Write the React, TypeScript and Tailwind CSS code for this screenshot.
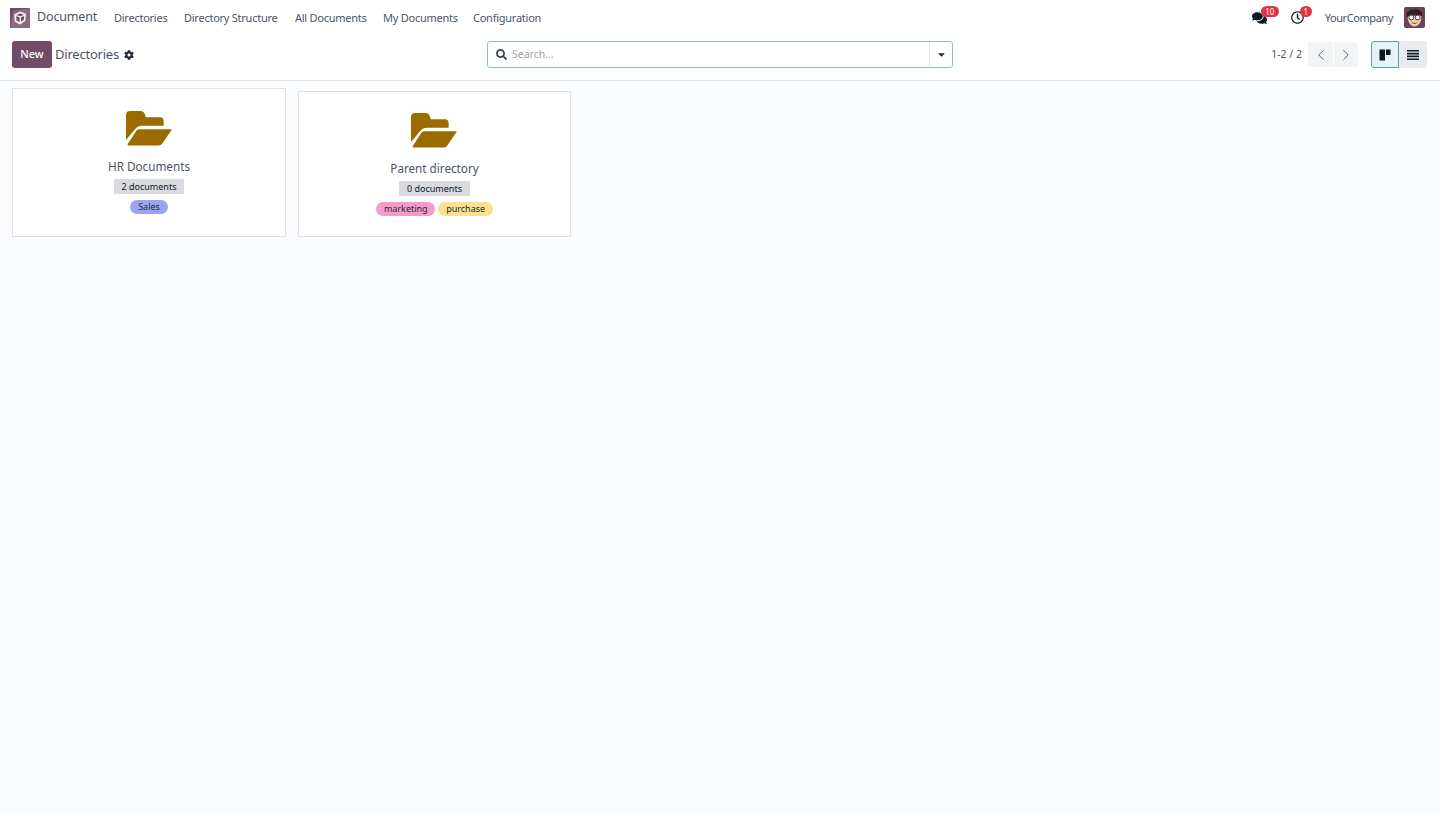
import React from "react";
import { FaCog, FaSearch, FaComments, FaCaretDown, FaRegClock } from "react-icons/fa";
import { ChevronLeft, ChevronRight } from "lucide-react";

function Logo() {
  return (
    <svg width="20" height="20" viewBox="0 0 20 20" className="shrink-0">
      <rect width="20" height="20" fill="#6f4d66" />
      <path d="M20 0v20H0L3 3z" fill="#8a6a80" />
      <path d="M10.200 3.400 16 5.800 15.400 13 9.800 16.400 4.800 13.800 4.200 6.200Z" fill="#f4eff2" />
      <path d="M6.400 7 10.200 5.400 13.800 6.800 10.400 8.200ZM6.200 8 9.600 9.400 9.600 14.200 6.600 12.600ZM11 9.200 14.200 8 13.800 12 11 13.800Z" fill="#6b5065" />
    </svg>
  );
}

function Avatar() {
  return (
    <svg width="21" height="21" viewBox="0 0 21 21" className="shrink-0">
      <rect width="21" height="21" rx="2" fill="#6e3f56" />
      <path d="M3.500 9c0 6.500 3.500 10.500 7 10.500s7-4 7-10.500z" fill="#f3c9a5" />
      <path d="M2.800 11V5.500L6.500 2.600h8l3.700 3V11l-1.300-3.500-3.400.5-5.500-.7-2.500.7z" fill="#2b2320" />
      <circle cx="7.300" cy="10.500" r="2.400" fill="#fff" stroke="#333" strokeWidth=".9" />
      <circle cx="13.700" cy="10.500" r="2.400" fill="#fff" stroke="#333" strokeWidth=".9" />
      <path d="M7.500 15c2 1.200 4 1.200 6 0-1 2.500-5 2.500-6 0z" fill="#8c3b34" />
    </svg>
  );
}

function Folder() {
  return (
    <svg width="46" height="35" viewBox="0 0 46 35" className="-ml-[1px] shrink-0 text-[#9c6b00]">
      <path
        d="M0 4Q0 0 4 0H15Q17.700 0 18.500 2.500L19.800 6.300H33.700Q37.700 6.300 37.700 10.700V14.700H16Q12 14.700 9.300 18L0 29Z"
        fill="currentColor"
      />
      <path
        d="M12.700 18.300H46L36.700 32Q35 34.500 32.700 34.500H3Q1 34.500 2 32.500L9.300 21.500Q10.700 18.300 12.700 18.300Z"
        fill="currentColor"
      />
    </svg>
  );
}

function KanbanIcon() {
  return (
    <svg width="12" height="12" viewBox="0 0 12 12" className="text-[#111827]">
      <path d="M0.500 .5h5.500v11H0.500zM7 .5h4.500v5.500H7z" fill="currentColor" />
    </svg>
  );
}

function ListIcon() {
  return (
    <svg width="12" height="10" viewBox="0 0 12 10" className="text-[#111827]">
      <path d="M0 0h12v1.600H0zM0 2.800h12v1.600H0zM0 5.600h12v1.600H0zM0 8.400h12V10H0z" fill="currentColor" />
    </svg>
  );
}

function Tag({ label, bg }: { label: string; bg: string }) {
  return <span className={`${bg} h-[14px] rounded-full px-[7.750px] text-[9px] leading-[14px] text-[#1f2937]`}>{label}</span>;
}

function Card({ title, count, className, children }: { title: string; count: string; className: string; children: React.ReactNode }) {
  return (
    <div className={`${className} flex flex-col items-center border border-[#dee2e6] bg-white`}>
      <Folder />
      <div className="mt-[11px] text-[11.700px] leading-[18px] text-[#4b5563]">{title}</div>
      <div className="mt-[4px] bg-[#d8dadd] px-2 text-[9px] leading-[15px] text-[#111827]">{count}</div>
      <div className="mt-[6px] flex gap-[3px]">{children}</div>
    </div>
  );
}

export default function App() {
  return (
    <div className="flex min-h-[813px] flex-col bg-[#f9fbfc] font-['Noto_Sans',sans-serif]">
      <nav className="flex h-[35px] items-center bg-white pl-[10px] pr-[15px] text-[#4b5563]">
        <Logo />
        <span className="ml-[7px] w-[77px] text-[12.500px] tracking-[-0.15px]">Document</span>
        <div className="mt-px flex text-[11px] tracking-[-0.25px]">
          <span className="w-[70px]">Directories</span>
          <span className="w-[111px]">Directory Structure</span>
          <span className="w-[88px]">All Documents</span>
          <span className="w-[90px]">My Documents</span>
          <span>Configuration</span>
        </div>
        <div className="ml-auto flex items-center">
          <div className="relative mr-[25px] h-[14px] w-[14px] text-[#111827]">
            <FaComments className="h-[14px] w-[15px]" />
            <span className="absolute left-[9px] top-[-5px] h-[11px] w-[18px] rounded-full bg-[#dc3545] text-center text-[8px] leading-[11px] text-white">10</span>
          </div>
          <div className="relative mr-[20px] h-[14px] w-[14px] text-[#111827]">
            <FaRegClock className="h-[13px] w-[13px]" />
            <span className="absolute left-[9px] top-[-5px] h-[11px] w-[12px] rounded-full bg-[#dc3545] text-center text-[8px] leading-[11px] text-white">1</span>
          </div>
          <span className="mr-[11px] mt-px text-[11px] tracking-[-0.42px]">YourCompany</span>
          <Avatar />
        </div>
      </nav>

      <header className="flex h-[46px] items-start border-b border-[#dee2e6] bg-white pt-[6px]">
        <div className="flex w-[487px] items-center pl-[12px]">
          <button className="h-[27px] w-[40px] rounded-[3px] bg-[#714b67] text-[11px] font-medium text-white">New</button>
          <span className="ml-[3px] mt-px text-[13px] tracking-[-0.22px] text-[#4b5563]">Directories</span>
          <FaCog className="ml-[5px] h-[10px] w-[10px] text-[#1f2937]" />
        </div>
        <div className="flex h-[27px] w-[466px] items-center rounded-[3px] border border-[#8fc3bf] bg-white">
          <FaSearch className="ml-[8px] h-[11px] w-[11px] text-[#374151]" />
          <span className="ml-[5px] flex-1 text-[10.500px] text-[#9ca3af]">Search...</span>
          <div className="flex h-full w-[23px] items-center justify-center border-l border-[#dee2e6]">
            <FaCaretDown className="h-[11px] w-[11px] text-[#1f2937]" />
          </div>
        </div>
        <div className="flex flex-1 items-center justify-end pr-[13px]">
          <span className="mr-[6px] text-[10.500px] text-[#4b5563]">1-2 / 2</span>
          <div className="mr-[13px] flex h-[25px]">
            <div className="flex w-[25px] items-center justify-center rounded-l-[3px] bg-[#f1f3f5]">
              <ChevronLeft size={18} strokeWidth={1.25} className="text-[#4b5563]" />
            </div>
            <div className="flex w-[25px] items-center justify-center rounded-r-[3px] border-l border-white bg-[#f1f3f5]">
              <ChevronRight size={18} strokeWidth={1.25} className="text-[#4b5563]" />
            </div>
          </div>
          <div className="flex h-[27px]">
            <div className="flex w-[28px] items-center justify-center rounded-l-[3px] border border-[#5f9f9f] bg-[#e6f2f3]">
              <KanbanIcon />
            </div>
            <div className="flex w-[28px] items-center justify-center rounded-r-[3px] bg-[#e9ecef]">
              <ListIcon />
            </div>
          </div>
        </div>
      </header>

      <main className="flex items-end gap-[12px] px-[12px] pt-[7px]">
        <Card title="HR Documents" count="2 documents" className="h-[149px] w-[274px] pt-[22px]">
          <Tag label="Sales" bg="bg-[#9aa5f2]" />
        </Card>
        <Card title="Parent directory" count="0 documents" className="h-[146px] w-[273px] pt-[21px]">
          <Tag label="marketing" bg="bg-[#f79ac6]" />
          <Tag label="purchase" bg="bg-[#fbe08d]" />
        </Card>
      </main>
    </div>
  );
}
